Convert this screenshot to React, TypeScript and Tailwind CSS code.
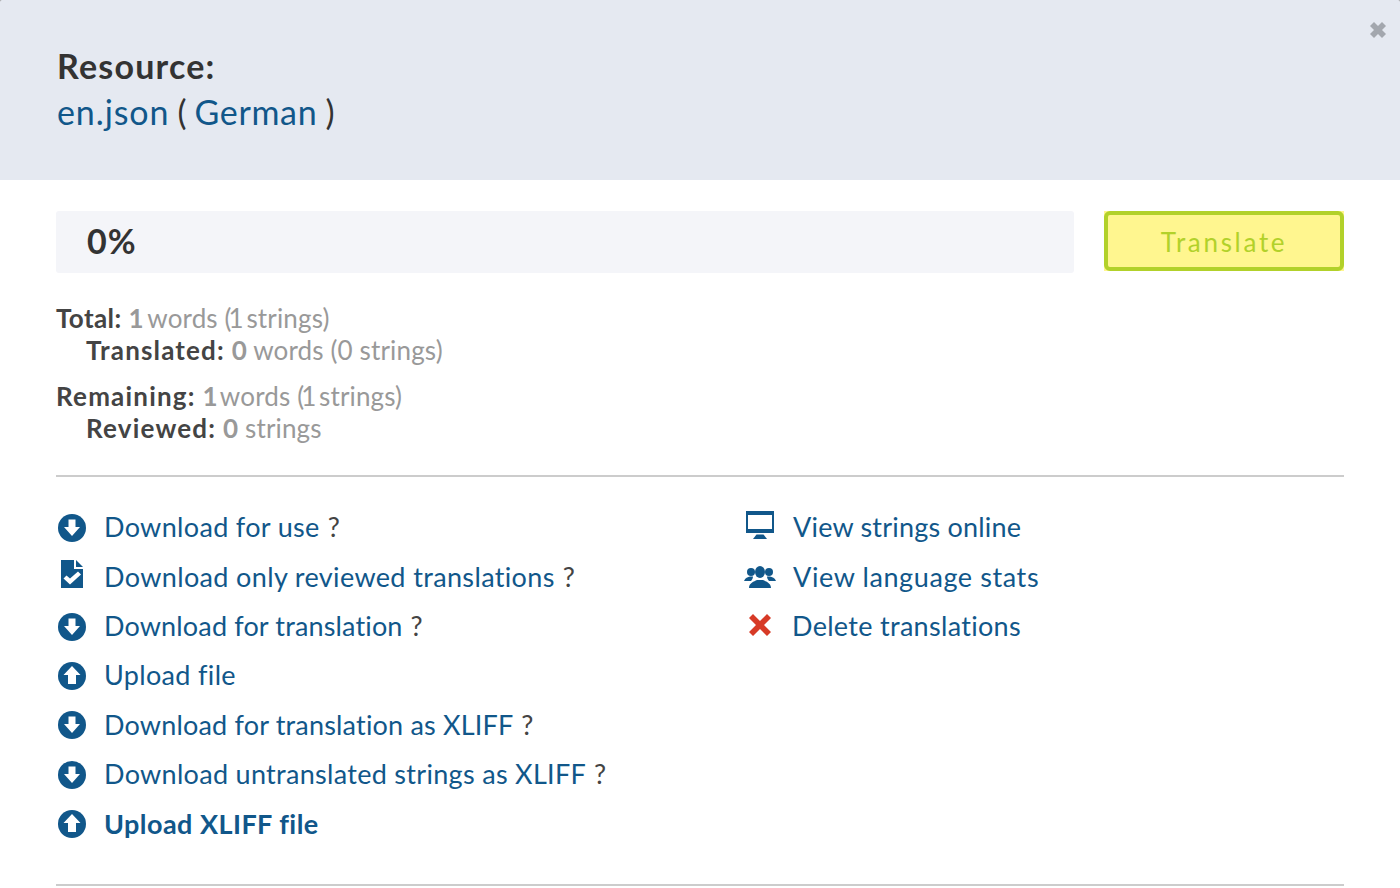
import React from "react";

const BLUE = "#11578a";

function ArrowCircle({ up }: { up?: boolean }) {
  return (
    <svg width="28" height="28" viewBox="0 0 28 28" aria-hidden="true">
      <circle cx="14" cy="14" r="14" fill={BLUE} />
      {up ? (
        <path d="M14 4 L22.5 13 H18 V22 H10 V13 H5.5 Z" fill="#fff" />
      ) : (
        <path d="M10.5 5.5 H17.5 V13 H22 L14 22 L6 13 H10.5 Z" fill="#fff" />
      )}
    </svg>
  );
}

function FileCheck() {
  return (
    <svg className="mb-[6px]" width="22" height="28" viewBox="0 0 22 28" aria-hidden="true">
      <path d="M0 0 H13 V9 H22 V28 H0 Z" fill={BLUE} />
      <path d="M15 0 L22 7 H15 Z" fill={BLUE} />
      <path d="M2.5 18.5 L5.5 15.5 L9 18.5 L17 11.5 L20 14.5 L9 24.5 Z" fill="#fff" />
    </svg>
  );
}

function Monitor() {
  return (
    <svg className="mb-[6px]" width="28" height="28" viewBox="0 0 28 28" aria-hidden="true">
      <path fillRule="evenodd" d="M0 0 H28 V22 H0 Z M2 4 V18 H26 V4 Z" fill={BLUE} />
      <path d="M10.5 23.5 H17.5 L21 28 H7 Z" fill={BLUE} />
    </svg>
  );
}

function People() {
  return (
    <svg width="32" height="22" viewBox="0 0 32 22" aria-hidden="true">
      <circle cx="7" cy="6" r="4" fill={BLUE} />
      <circle cx="25" cy="6" r="4" fill={BLUE} />
      <path d="M0 15 C1 12 4 11 6 10.5 L9 10.5 C9 12 8 14 7 15 Z" fill={BLUE} />
      <path d="M32 15 C31 12 28 11 26 10.5 L23 10.5 C23 12 24 14 25 15 Z" fill={BLUE} />
      <ellipse cx="16" cy="6" rx="5" ry="6" fill={BLUE} />
      <path d="M5 22 C5 17 10 15.5 13 14 H19 C22 15.5 27 17 27 22 Z" fill={BLUE} />
    </svg>
  );
}

function RedCross() {
  return (
    <svg className="mb-[4px]" width="22" height="22" viewBox="0 0 22 22" aria-hidden="true">
      <path d="M4 0 L11 7 L18 0 L22 4 L15 11 L22 18 L18 22 L11 15 L4 22 L0 18 L7 11 L0 4 Z" fill="#d73a26" />
    </svg>
  );
}

type RowProps = {
  icon: React.ReactNode;
  label: string;
  help?: boolean;
  h: string;
  labelClass: string;
};

function Row({ icon, label, help, h, labelClass }: RowProps) {
  return (
    <div className={`flex items-center ${h}`}>
      <span className="flex w-8 justify-center">{icon}</span>
      <a className={`text-[#11578a] ${labelClass}`}>{label}</a>
      {help && <span className="ml-2 text-[#444]">?</span>}
    </div>
  );
}

export default function App() {
  return (
    <div className="h-[888px] w-[1400px] overflow-hidden bg-[#9a9a9a] font-['Lato','Liberation_Sans',sans-serif] text-[#333]">
      <header className="relative h-[180px] rounded-t-[2px] bg-[#e5e9f1] px-[57px] pt-[43px] text-[34px] leading-[46px]">
        <h2 className="font-bold tracking-[1.2px]">Resource:</h2>
        <p>
          <a className="tracking-[0.9px] text-[#11578a]">en.json</a>
          <span className="tracking-[-0.5px]"> ( </span>
          <a className="tracking-[0.7px] text-[#11578a]">German</a>
          <span className="tracking-[-0.5px]"> )</span>
        </p>
        <span className="absolute right-[14px] top-[22px] text-[#a3a7ae]">
          <svg className="block" width="16" height="16" viewBox="0 0 16 16" aria-hidden="true">
            <path d="M4 0 L8 4 L12 0 L16 4 L12 8 L16 12 L12 16 L8 12 L4 16 L0 12 L4 8 L0 4 Z" fill="currentColor" />
          </svg>
        </span>
      </header>

      <main className="h-[708px] bg-white px-[56px] pt-[31px]">
        <div className="flex items-start justify-between">
          <div className="flex h-[62px] w-[1018px] items-center rounded-[3px] bg-[#f4f5f9] pb-[4px] pl-[31px] text-[34px] font-bold tracking-[1px] text-[#333]">
            0%
          </div>
          <button type="button" className="h-[60px] w-[240px] bg-[#fff68f]">
            <span className="flex h-full w-full items-center justify-center rounded-[6px] border-4 border-[#b2d12a] pt-[3px] text-[26px] tracking-[2.7px] text-[#b2d12a]">
              Translate
            </span>
          </button>
        </div>

        <div className="mt-[29px] text-[26px] leading-[32px] tracking-[0.15px] text-[#999]">
          <div>
            <b className="tracking-[0.4px] text-[#444]">Total:</b> <b className="tracking-[-2.5px]">1</b> words <span className="tracking-[-3px]">(</span><span className="tracking-[-4px]">1</span> strings)
          </div>
          <div className="pl-[30px]">
            <b className="tracking-[1.15px] text-[#444]">Translated:</b> <b>0</b> words (0 strings)
          </div>
          <div className="mt-[14px]">
            <b className="tracking-[1.2px] text-[#444]">Remaining:</b> <b className="tracking-[-4px]">1</b> words <span className="tracking-[-3px]">(</span><span className="tracking-[-4px]">1</span> strings)
          </div>
          <div className="pl-[30px]">
            <b className="tracking-[1.2px] text-[#444]">Reviewed:</b> <b>0</b> strings
          </div>
        </div>

        <hr className="mt-[31px] border-0 border-t-2 border-[#ccc]" />

        <div className="mt-[26px] flex text-[27px]">
          <div className="w-[688px]">
            <Row h="h-[49px]" icon={<ArrowCircle />} label="Download for use" help labelClass="ml-[16px] tracking-[0.33px]" />
            <Row h="h-[50px]" icon={<FileCheck />} label="Download only reviewed translations" help labelClass="ml-[16px] tracking-[0.36px]" />
            <Row h="h-[49px]" icon={<ArrowCircle />} label="Download for translation" help labelClass="ml-[16px] tracking-[0.15px]" />
            <Row h="h-[49px]" icon={<ArrowCircle up />} label="Upload file" labelClass="ml-[16px] tracking-[0.33px]" />
            <Row h="h-[50px]" icon={<ArrowCircle />} label="Download for translation as XLIFF" help labelClass="ml-[16px] tracking-[0.18px]" />
            <Row h="h-[49px]" icon={<ArrowCircle />} label="Download untranslated strings as XLIFF" help labelClass="ml-[16px] tracking-[0.3px]" />
            <Row h="h-[50px]" icon={<ArrowCircle up />} label="Upload XLIFF file" labelClass="ml-[16px] font-bold tracking-[0.45px]" />
          </div>
          <div>
            <Row h="h-[49px]" icon={<Monitor />} label="View strings online" labelClass="ml-[17px] tracking-[0.2px]" />
            <Row h="h-[50px]" icon={<People />} label="View language stats" labelClass="ml-[17px] tracking-[0.6px]" />
            <Row h="h-[49px]" icon={<RedCross />} label="Delete translations" labelClass="ml-[16px] tracking-[0.3px]" />
          </div>
        </div>

        <hr className="mt-[35px] border-0 border-t-2 border-[#ccc]" />
      </main>
    </div>
  );
}
